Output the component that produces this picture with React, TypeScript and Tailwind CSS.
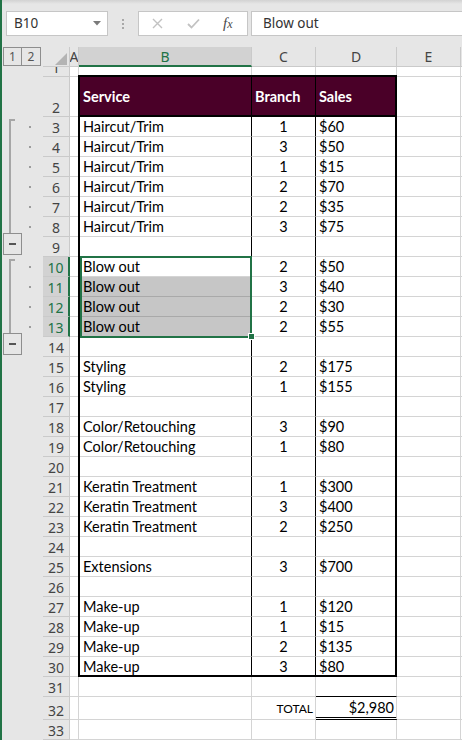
import React from "react";

const DATA: Record<number, [string, string, string]> = {
  3: ["Haircut/Trim", "1", "$60"],
  4: ["Haircut/Trim", "3", "$50"],
  5: ["Haircut/Trim", "1", "$15"],
  6: ["Haircut/Trim", "2", "$70"],
  7: ["Haircut/Trim", "2", "$35"],
  8: ["Haircut/Trim", "3", "$75"],
  10: ["Blow out", "2", "$50"],
  11: ["Blow out", "3", "$40"],
  12: ["Blow out", "2", "$30"],
  13: ["Blow out", "2", "$55"],
  15: ["Styling", "2", "$175"],
  16: ["Styling", "1", "$155"],
  18: ["Color/Retouching", "3", "$90"],
  19: ["Color/Retouching", "1", "$80"],
  21: ["Keratin Treatment", "1", "$300"],
  22: ["Keratin Treatment", "3", "$400"],
  23: ["Keratin Treatment", "2", "$250"],
  25: ["Extensions", "3", "$700"],
  27: ["Make-up", "1", "$120"],
  28: ["Make-up", "1", "$15"],
  29: ["Make-up", "2", "$135"],
  30: ["Make-up", "3", "$80"],
};

const CELL = "font-['Lato',sans-serif] text-[14.5px] text-black";

function OutlineCell({ n }: { n: number }) {
  const inGroup = (n >= 3 && n <= 8) || (n >= 10 && n <= 13);
  const first = n === 3 || n === 10;
  const box = n === 9 || n === 14;
  return (
    <div className="relative w-[41px] shrink-0">
      {inGroup && (
        <>
          <div
            className={`absolute left-[7px] w-[2px] bg-[#a6a6a6] bottom-0 ${first ? "top-[2px]" : "top-0"}`}
          />
          {first && <div className="absolute left-[7px] top-[2px] w-[6px] h-[2px] bg-[#a6a6a6]" />}
          <div className="absolute left-[27px] top-[9px] w-[2px] h-[2px] bg-[#9c9c9c]" />
        </>
      )}
      {box && (
        <div className="absolute left-[1px] top-[-4px] w-[19px] h-[22px] border border-[#8e8e8e] bg-[#e6e6e6] flex items-center justify-center z-10">
          <div className="w-[7px] h-[2px] bg-[#555555]" />
        </div>
      )}
    </div>
  );
}

function RowHeader({ n, sel }: { n: number; sel?: boolean }) {
  return (
    <div
      className={`w-[27px] shrink-0 flex items-end justify-center overflow-hidden border-b border-b-[#cacaca] pb-[1px] text-[14px] leading-[14px] ${
        sel
          ? "bg-[#d2d2d2] text-[#217346] border-r-2 border-r-[#217346]"
          : "border-r border-r-[#cacaca] text-[#444444]"
      }`}
    >
      {n}
    </div>
  );
}

function BodyRow({ n }: { n: number }) {
  const d = DATA[n];
  const inTable = n >= 3 && n <= 30;
  const sel = n >= 10 && n <= 13;
  const shaded = n >= 11 && n <= 13;
  const h = n === 32 ? "h-[23px]" : "h-[20px]";
  const vline = inTable ? "border-r-black" : "border-r-[#d4d4d4]";
  return (
    <div className={`flex ${h}`}>
      <OutlineCell n={n} />
      <RowHeader n={n} sel={sel} />
      <div className="w-[9px] shrink-0 bg-white border-r border-b border-[#d4d4d4]" />
      <div
        className={`w-[173px] shrink-0 flex items-end pl-[4px] border-r border-b ${vline} ${
          shaded ? "bg-[#c6c6c6] border-b-[#a9a9a9]" : "bg-white border-b-[#d4d4d4]"
        } ${CELL} leading-[18px]`}
      >
        {d ? d[0] : ""}
      </div>
      <div
        className={`w-[64px] shrink-0 flex items-end bg-white border-r border-b border-b-[#d4d4d4] ${vline} ${CELL} leading-[18px] ${
          n === 32 ? "justify-end pr-[2px]" : "justify-center"
        }`}
      >
        {n === 32 ? <span className="text-[12px] leading-[16px] pb-[2px]">TOTAL</span> : d ? d[1] : ""}
      </div>
      <div
        className={`w-[81px] shrink-0 flex items-end bg-white border-r border-r-[#d4d4d4] ${CELL} leading-[18px] ${
          n === 31
            ? "border-b border-b-black"
            : n === 32
            ? "border-b-[3px] border-double border-b-black justify-end pr-[2px]"
            : "border-b border-b-[#d4d4d4] pl-[3px]"
        }`}
      >
        {n === 32 ? "$2,980" : d ? d[2] : ""}
      </div>
      <div className="w-[64px] shrink-0 bg-white border-r border-b border-[#d4d4d4]" />
      <div className="flex-1 bg-white border-b border-[#d4d4d4]" />
    </div>
  );
}

export default function App() {
  const rows: number[] = [];
  for (let i = 3; i <= 33; i++) rows.push(i);
  return (
    <div className="relative w-[462px] h-[740px] overflow-hidden bg-[#e6e6e6] border-l-2 border-[#217346] font-['Noto_Sans',sans-serif]">
      {/* Formula bar area */}
      <div className="h-[47px] flex flex-col">
        <div className="h-[4px] bg-linear-to-b from-[#d2d2d2] to-[#e6e6e6]" />
        <div className="flex h-[25px] mt-[7px]">
          <div className="ml-[4px] w-[102px] bg-white border border-[#c6c6c6] flex items-center justify-between pl-[7px] pr-[6px]">
            <span className="text-[13.5px] text-[#333333]">B10</span>
            <svg width="8" height="5" viewBox="0 0 8 5">
              <path d="M0 0 L8 0 L4 4.5 Z" fill="#7a7a7a" />
            </svg>
          </div>
          <div className="w-[30px] flex flex-col items-center justify-center gap-[2px]">
            <div className="w-[2px] h-[2px] bg-[#a8a8a8]" />
            <div className="w-[2px] h-[2px] bg-[#a8a8a8]" />
            <div className="w-[2px] h-[2px] bg-[#a8a8a8]" />
          </div>
          <div className="w-[110px] bg-white border border-[#c6c6c6] flex items-center">
            <svg className="ml-[13px]" width="11" height="11" viewBox="0 0 11 11">
              <path d="M1 1 L10 10 M10 1 L1 10" stroke="#c2c2c2" strokeWidth="1.4" />
            </svg>
            <svg className="ml-[24px]" width="13" height="11" viewBox="0 0 13 11">
              <path d="M1 6 L4.5 9.5 L12 1.5" stroke="#c2c2c2" strokeWidth="1.8" fill="none" />
            </svg>
            <span className="ml-[23px] font-['Liberation_Serif',serif] italic text-[15px] text-[#4a4a4a] leading-none">
              f<span className="text-[12px]">x</span>
            </span>
          </div>
          <div className="ml-[3px] flex-1 bg-white border border-r-0 border-[#c6c6c6] flex items-center pl-[11px]">
            <span className="text-[13.5px] text-[#333333]">Blow out</span>
          </div>
        </div>
      </div>

      {/* Column header row */}
      <div className="flex h-[20px]">
        <div className="w-[41px] shrink-0 flex pl-[1px]">
          <div className="w-[19px] h-[19px] border border-[#8e8e8e] flex items-center justify-center text-[12px] text-[#555555]">
            1
          </div>
          <div className="-ml-px w-[20px] h-[19px] border border-[#8e8e8e] flex items-center justify-center text-[12px] text-[#555555]">
            2
          </div>
        </div>
        <div className="w-[27px] shrink-0 border-r border-b border-[#cacaca] flex items-end justify-end pr-[2px] pb-[1px]">
          <svg width="12" height="12" viewBox="0 0 12 12">
            <path d="M12 0 L12 12 L0 12 Z" fill="#b4b4b4" />
          </svg>
        </div>
        <div className="w-[9px] shrink-0 overflow-hidden border-r border-b border-[#cacaca] flex items-center justify-center text-[14px] text-[#444444]">
          A
        </div>
        <div className="w-[173px] shrink-0 bg-[#d2d2d2] border-r border-r-[#cacaca] border-b-2 border-b-[#217346] flex items-center justify-center text-[14px] text-[#217346]">
          B
        </div>
        <div className="w-[64px] shrink-0 border-r border-b border-[#cacaca] flex items-center justify-center text-[14px] text-[#444444]">
          C
        </div>
        <div className="w-[81px] shrink-0 border-r border-b border-[#cacaca] flex items-center justify-center text-[14px] text-[#444444]">
          D
        </div>
        <div className="w-[64px] shrink-0 border-r border-b border-[#cacaca] flex items-center justify-center text-[14px] text-[#444444]">
          E
        </div>
        <div className="flex-1 border-b border-[#cacaca]" />
      </div>

      {/* Row 1 */}
      <div className="flex h-[10px]">
        <div className="w-[41px] shrink-0" />
        <RowHeader n={1} />
        <div className="w-[9px] shrink-0 bg-white border-r border-b border-[#d4d4d4]" />
        <div className="w-[173px] shrink-0 bg-white border-r border-b border-[#d4d4d4]" />
        <div className="w-[64px] shrink-0 bg-white border-r border-b border-[#d4d4d4]" />
        <div className="w-[81px] shrink-0 bg-white border-r border-b border-[#d4d4d4]" />
        <div className="w-[64px] shrink-0 bg-white border-r border-b border-[#d4d4d4]" />
        <div className="flex-1 bg-white border-b border-[#d4d4d4]" />
      </div>

      {/* Row 2: table header */}
      <div className="flex h-[40px]">
        <div className="w-[41px] shrink-0" />
        <RowHeader n={2} />
        <div className="w-[9px] shrink-0 bg-white border-r border-b border-[#d4d4d4]" />
        <div className="w-[173px] shrink-0 bg-[#4a0028] border-r border-r-black border-b-2 border-b-black flex items-center pl-[4px] pt-[1px] font-['Lato',sans-serif] text-[14.5px] font-bold text-white">
          Service
        </div>
        <div className="w-[64px] shrink-0 bg-[#4a0028] border-r border-r-black border-b-2 border-b-black flex items-center pl-[3px] pt-[1px] font-['Lato',sans-serif] text-[14.5px] font-bold text-white">
          Branch
        </div>
        <div className="w-[81px] shrink-0 bg-[#4a0028] border-r border-r-black border-b-2 border-b-black flex items-center pl-[3px] pt-[1px] font-['Lato',sans-serif] text-[14.5px] font-bold text-white">
          Sales
        </div>
        <div className="w-[64px] shrink-0 bg-white border-r border-b border-[#d4d4d4]" />
        <div className="flex-1 bg-white border-b border-[#d4d4d4]" />
      </div>

      {rows.map((n) => (
        <BodyRow key={n} n={n} />
      ))}

      {/* Table outline border */}
      <div className="absolute left-[76px] top-[75px] w-[319px] h-[602px] border-2 border-black pointer-events-none" />

      {/* Selection B10:B13 */}
      <div className="absolute left-[78px] top-[256px] w-[172px] h-[82px] border-2 border-[#217346] pointer-events-none" />
      <div className="absolute left-[246px] top-[333px] w-[7px] h-[7px] bg-[#217346] border border-white pointer-events-none" />
    </div>
  );
}
